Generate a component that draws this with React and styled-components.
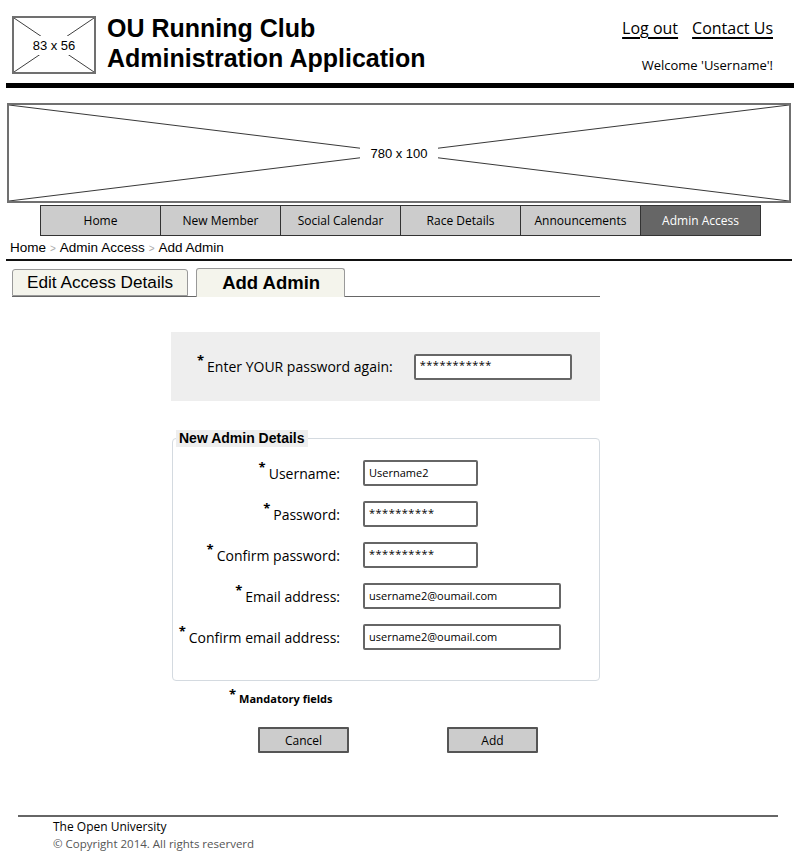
import React from 'react'
import styled, { createGlobalStyle } from 'styled-components'

const GlobalStyle = createGlobalStyle`
  body {
    margin: 0;
    background: #fff;
    color: #000;
    font-family: "Open Sans", "DejaVu Sans", sans-serif;
  }
`

const Page = styled.div`
  width: 800px;
  height: 860px;
  position: relative;
  overflow: hidden;
`

const Header = styled.header`
  display: flex;
  justify-content: space-between;
  height: 83px;
  box-sizing: border-box;
  padding: 16px 27px 0 12px;
`

const Brand = styled.div`
  display: flex;
  gap: 11px;
`

const Title = styled.h1`
  margin: 0;
  font-family: "Liberation Sans", Arial, sans-serif;
  font-weight: bold;
  font-size: 25px;
  line-height: 30px;
  margin-top: -3px;
`

const Placeholder = styled.div`
  position: relative;
  width: ${p => p.$w}px;
  height: ${p => p.$h}px;
  box-sizing: border-box;
  border: 2px solid #707070;
  display: flex;
  align-items: center;
  justify-content: center;
  background: #fff;
  flex-shrink: 0;
`

const Cross = styled.svg`
  position: absolute;
  inset: 0;
  width: 100%;
  height: 100%;
`

const PlaceholderLabel = styled.span`
  position: relative;
  font-family: "Liberation Sans", Arial, sans-serif;
  font-size: 13px;
  background: #fff;
  padding: ${p => (p.$wide ? '6px 10px' : '2px 1px')};
`

const UserBox = styled.div`
  display: flex;
  flex-direction: column;
  align-items: flex-end;
`

const Links = styled.div`
  display: flex;
  gap: 14px;
`

const HeaderLink = styled.a`
  font-size: 16px;
  color: #000;
  text-decoration: underline;
  text-decoration-thickness: 1.5px;
  text-underline-offset: 3px;
  line-height: 24px;
`

const Welcome = styled.div`
  font-size: 13px;
  margin-top: 16px;
  line-height: 18px;
`

const ThickRule = styled.div`
  height: 5px;
  background: #000;
  margin: 0 6px;
`

const Banner = styled.div`
  margin: 15px 9px 0 7px;
`

const Nav = styled.nav`
  display: flex;
  margin: 2px 0 0 40px;
`

const NavItem = styled.div`
  width: 121px;
  height: 31px;
  box-sizing: border-box;
  border: 1px solid #333;
  margin-left: -1px;
  &:first-child { margin-left: 0; }
  background: ${p => (p.$active ? '#666' : '#cccccc')};
  color: ${p => (p.$active ? '#fff' : '#000')};
  font-size: 12px;
  display: flex;
  align-items: center;
  justify-content: center;
`

const Breadcrumb = styled.div`
  font-family: "Liberation Sans", Arial, sans-serif;
  font-size: 13.5px;
  padding: 4px 0 0 10px;
  height: 16px;
`

const Sep = styled.span`
  color: #aaa;
  font-size: 10px;
  margin: 0 4px;
`

const Rule = styled.div`
  height: 2px;
  background: #111;
  margin: 3px 8px 0 6px;
`

const TabStrip = styled.div`
  display: flex;
  align-items: flex-end;
  gap: 8px;
  width: 588px;
  margin: 7px 0 0 12px;
  border-bottom: 1px solid #666;
`

const Tab = styled.div`
  height: ${p => (p.$active ? 29 : 27)}px;
  box-sizing: border-box;
  padding: 0 ${p => (p.$active ? 24 : 14)}px 0 ${p => (p.$active ? 25 : 14)}px;
  background: #f4f4ec;
  border: 1px solid #999;
  border-bottom: ${p => (p.$active ? 'none' : '1px solid #999')};
  margin-bottom: ${p => (p.$active ? '-1px' : '0')};
  border-radius: 3px 3px 0 0;
  font-family: "Liberation Sans", Arial, sans-serif;
  font-size: ${p => (p.$active ? 18.5 : 17.2)}px;
  font-weight: ${p => (p.$active ? 'bold' : 'normal')};
  display: flex;
  align-items: center;
`

const Content = styled.div`
  margin-left: 171px;
  width: 429px;
`

const VerifyPanel = styled.div`
  margin-top: 35px;
  height: 69px;
  background: #eeeeee;
  display: flex;
  align-items: center;
  padding-left: 26px;
  gap: 21px;
`

const Label = styled.label`
  font-size: 14px;
  display: flex;
  align-items: flex-start;
  white-space: nowrap;
`

const Star = styled.span`
  font-size: 13px;
  font-weight: bold;
  margin-right: 3px;
  margin-top: -6px;
`

const Input = styled.div`
  width: ${p => p.$w}px;
  height: 26px;
  box-sizing: border-box;
  border: 2px solid #666;
  border-radius: 2px;
  background: #fff;
  font-size: 11px;
  padding: 0 4px;
  display: flex;
  align-items: center;
  padding-bottom: ${p => (p.$stars ? '4px' : '2px')};
  letter-spacing: ${p => (p.$stars ? '0.5px' : '0')};
`

const Fieldset = styled.fieldset`
  margin: 29px 0 0 1px;
  padding: 13px 0 30px 0;
  border: 1px solid #d4dae0;
  border-radius: 4px;
`

const Legend = styled.legend`
  font-family: "Liberation Sans", Arial, sans-serif;
  font-size: 14px;
  font-weight: bold;
  background: #eee;
  padding: 0 3px;
  margin-left: 3px;
  line-height: 17px;
`

const FormGrid = styled.div`
  display: grid;
  grid-template-columns: 167px auto;
  column-gap: 23px;
  row-gap: 15px;
  align-items: center;
`

const RowLabel = styled(Label)`
  justify-content: flex-end;
`

const Mandatory = styled.div`
  display: flex;
  align-items: flex-start;
  margin: 10px 0 0 58px;
  font-size: 11px;
  font-weight: bold;
`

const Buttons = styled.div`
  display: flex;
  gap: 98px;
  margin: 21px 0 0 87px;
`

const Button = styled.button`
  width: 91px;
  height: 26px;
  background: #cccccc;
  border: 2px solid #555;
  border-radius: 1px;
  font-family: "Open Sans", "DejaVu Sans", sans-serif;
  font-size: 12px;
  color: #000;
  padding: 0;
`

const Footer = styled.footer`
  position: absolute;
  left: 18px;
  right: 22px;
  top: 815px;
  border-top: 2px solid #666;
  padding: 1px 0 0 35px;
`

const FooterLine = styled.div`
  font-size: ${p => (p.$small ? 11.5 : 12)}px;
  color: ${p => (p.$small ? '#555' : '#000')};
  line-height: 17px;
`

const Cross2 = ({ w, h }) => (
  <Cross viewBox={`0 0 ${w} ${h}`} preserveAspectRatio="none">
    <line x1="0" y1="0" x2={w} y2={h} stroke="#333" strokeWidth="1" />
    <line x1={w} y1="0" x2="0" y2={h} stroke="#333" strokeWidth="1" />
  </Cross>
)

const navItems = ['Home', 'New Member', 'Social Calendar', 'Race Details', 'Announcements', 'Admin Access']

const fields = [
  { label: 'Username:', value: 'Username2', w: 115 },
  { label: 'Password:', value: '**********', w: 115, stars: true },
  { label: 'Confirm password:', value: '**********', w: 115, stars: true },
  { label: 'Email address:', value: 'username2@oumail.com', w: 198 },
  { label: 'Confirm email address:', value: 'username2@oumail.com', w: 198 },
]

const App = () => {
  return (
    <Page>
      <GlobalStyle />
      <Header>
        <Brand>
          <Placeholder $w={84} $h={58}>
            <Cross2 w={84} h={58} />
            <PlaceholderLabel>83 x 56</PlaceholderLabel>
          </Placeholder>
          <Title>
            OU Running Club
            <br />
            Administration Application
          </Title>
        </Brand>
        <UserBox>
          <Links>
            <HeaderLink>Log out</HeaderLink>
            <HeaderLink>Contact Us</HeaderLink>
          </Links>
          <Welcome>Welcome 'Username'!</Welcome>
        </UserBox>
      </Header>
      <ThickRule />

      <Banner>
        <Placeholder $w={784} $h={100}>
          <Cross2 w={784} h={100} />
          <PlaceholderLabel $wide>780 x 100</PlaceholderLabel>
        </Placeholder>
      </Banner>

      <Nav>
        {navItems.map(item => (
          <NavItem key={item} $active={item === 'Admin Access'}>{item}</NavItem>
        ))}
      </Nav>

      <Breadcrumb>
        Home<Sep>&gt;</Sep>Admin Access<Sep>&gt;</Sep>Add Admin
      </Breadcrumb>
      <Rule />

      <TabStrip>
        <Tab>Edit Access Details</Tab>
        <Tab $active>Add Admin</Tab>
      </TabStrip>

      <Content>
        <VerifyPanel>
          <Label><Star>*</Star>Enter YOUR password again:</Label>
          <Input $w={158} $stars>***********</Input>
        </VerifyPanel>

        <Fieldset>
          <Legend>New Admin Details</Legend>
          <FormGrid>
            {fields.map(f => (
              <React.Fragment key={f.label}>
                <RowLabel><Star>*</Star>{f.label}</RowLabel>
                <Input $w={f.w} $stars={f.stars}>{f.value}</Input>
              </React.Fragment>
            ))}
          </FormGrid>
        </Fieldset>

        <Mandatory><Star>*</Star>Mandatory fields</Mandatory>

        <Buttons>
          <Button>Cancel</Button>
          <Button>Add</Button>
        </Buttons>
      </Content>

      <Footer>
        <FooterLine>The Open University</FooterLine>
        <FooterLine $small>© Copyright 2014. All rights reserverd</FooterLine>
      </Footer>
    </Page>
  )
}

export default App
